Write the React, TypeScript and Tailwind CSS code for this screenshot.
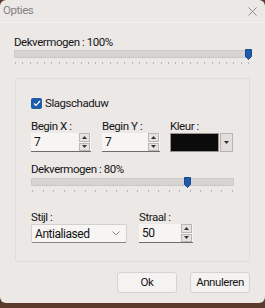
import React from 'react';

const font = { fontFamily: 'Roboto, "Noto Sans", sans-serif' };

const Ticks: React.FC<{ count: number }> = ({ count }) => (
  <div className="flex justify-between h-[3px] mt-[4px] px-[1px]">
    {Array.from({ length: count }).map((_, i) => (
      <div key={i} className="w-[1px] h-[2px] bg-[#bab5b2]" />
    ))}
  </div>
);

const Slider: React.FC<{ pos: number; ticks: number }> = ({ pos, ticks }) => (
  <div>
    <div className="relative h-[8px] bg-[#d7d3d1] border border-[#cdc8c5] rounded-[1px]">
      <svg className="absolute top-[-2px]" style={{ left: pos }} width="7" height="11" viewBox="0 0 7 11">
        <path d="M0.5 0.5h6v7l-3 3l-3-3z" fill="#1d5cab" stroke="#154a8d" />
      </svg>
    </div>
    <Ticks count={ticks} />
  </div>
);

const Spinner: React.FC = () => (
  <div className="flex flex-col w-[11px] h-[18px] gap-[1px]">
    <div className="flex-1 flex items-center justify-center bg-[#e6e2e0] border border-[#bbb6b3]">
      <svg width="5" height="3" viewBox="0 0 5 3"><path d="M0 3L2.5 0L5 3z" fill="#333" /></svg>
    </div>
    <div className="flex-1 flex items-center justify-center bg-[#e6e2e0] border border-[#bbb6b3]">
      <svg width="5" height="3" viewBox="0 0 5 3"><path d="M0 0L2.5 3L5 0z" fill="#333" /></svg>
    </div>
  </div>
);

const NumberInput: React.FC<{ value: string; width: string }> = ({ value, width }) => (
  <div className={`flex items-center justify-between h-[19px] ${width} bg-[#f7f5f4] border-b border-[#6f6b69] pl-[3px] pr-[1px]`}>
    <span className="text-[12px] text-[#111] leading-none">{value}</span>
    <Spinner />
  </div>
);

const Label: React.FC<{ children: React.ReactNode }> = ({ children }) => (
  <span className="text-[11.5px] leading-[14px] h-[14px] text-[#161616]">{children}</span>
);

export default function App() {
  return (
    <div className="w-[265px] h-[308px] bg-[#5a3b2c] overflow-hidden tracking-[-0.45px]" style={font}>
      <div className="w-[265px] h-[303px] bg-[#ece8e6] rounded-[6px] flex flex-col">
        <div className="flex items-center justify-between h-[23px] pl-[3px] pr-[8px] border-b border-[#f3f0ef]">
          <span className="text-[11.5px] text-[#858281]">Opties</span>
          <svg width="9" height="9" viewBox="0 0 9 9">
            <path d="M0.5 0.5l8 8M8.5 0.5l-8 8" stroke="#8c8988" strokeWidth="1" />
          </svg>
        </div>

        <div className="pl-[14px] pr-[15px] pt-[12px]">
          <div className="text-[11.5px] leading-[14px] text-[#161616] mb-[1px]">Dekvermogen : 100%</div>
          <Slider pos={230} ticks={33} />
        </div>

        <div className="ml-[15px] mt-[13px] w-[235px] h-[184px] border border-[#e0dcda] rounded-[2px] pl-[15px] pr-[17px] pt-[19px]">
          <div className="flex items-center gap-[3px] h-[11px]">
            <div className="w-[11px] h-[11px] rounded-[2px] bg-[#1d5cab] flex items-center justify-center">
              <svg width="8" height="7" viewBox="0 0 8 7">
                <path d="M1 3.5l2 2l4-4.5" stroke="#fff" strokeWidth="1.2" fill="none" />
              </svg>
            </div>
            <span className="text-[11.5px] text-[#161616]">Slagschaduw</span>
          </div>

          <div className="flex mt-[10px] gap-[11px]">
            <div className="flex flex-col">
              <Label>Begin X :</Label>
              <NumberInput value="7" width="w-[60px]" />
            </div>
            <div className="flex flex-col">
              <Label>Begin Y :</Label>
              <NumberInput value="7" width="w-[58px]" />
            </div>
            <div className="flex flex-col ml-[-1px]">
              <Label>Kleur :</Label>
              <div className="flex items-center h-[19px] gap-[1px]">
                <div className="w-[49px] h-[19px] bg-[#0b0b0b] border border-[#9a9593]" />
                <div className="w-[13px] h-[19px] bg-[#e2dedc] border border-[#b8b3b0] flex items-center justify-center">
                  <svg width="5" height="3" viewBox="0 0 5 3"><path d="M0 0L2.5 3L5 0z" fill="#333" /></svg>
                </div>
              </div>
            </div>
          </div>

          <div className="text-[11.5px] leading-[14px] text-[#161616] mt-[10px] mb-[2px]">Dekvermogen : 80%</div>
          <div className="w-[203px]">
            <Slider pos={152} ticks={20} />
          </div>

          <div className="flex mt-[17px] gap-[12px]">
            <div className="flex flex-col">
              <Label>Stijl :</Label>
              <div className="flex items-center justify-between w-[96px] h-[19px] bg-[#f7f5f4] border border-[#d3cfcd] border-b-[#8a8684] pl-[3px] pr-[6px] rounded-[2px]">
                <span className="text-[12px] text-[#111]">Antialiased</span>
                <svg width="8" height="5" viewBox="0 0 8 5">
                  <path d="M0.5 0.5l3.5 3.5l3.5-3.5" stroke="#888" fill="none" />
                </svg>
              </div>
            </div>
            <div className="flex flex-col">
              <Label>Straal :</Label>
              <NumberInput value="50" width="w-[54px]" />
            </div>
          </div>
        </div>

        <div className="flex justify-end gap-[13px] pr-[15px] mt-[10px]">
          <button className="w-[60px] h-[21px] bg-[#f5f3f2] border border-[#d6d2d0] rounded-[3px] text-[11.5px] text-[#161616]">Ok</button>
          <button className="w-[60px] h-[21px] bg-[#f5f3f2] border border-[#d6d2d0] rounded-[3px] text-[11.5px] text-[#161616]">Annuleren</button>
        </div>
      </div>
    </div>
  );
}
